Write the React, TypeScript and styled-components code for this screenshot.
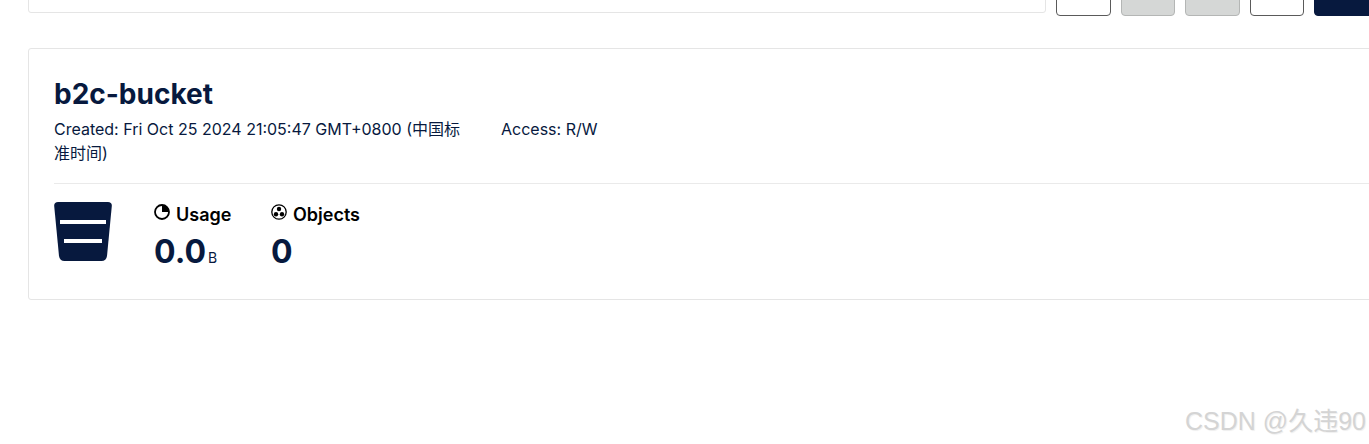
import styled, { createGlobalStyle } from "styled-components"

const GlobalStyle = createGlobalStyle`
  html, body {
    margin: 0;
    padding: 0;
    background: #fff;
  }
  body {
    font-family: Inter, "Noto Sans CJK SC", sans-serif;
    color: #07193e;
  }
`

const Page = styled.div`
  width: 1369px;
  height: 444px;
  overflow: hidden;
  position: relative;
  box-sizing: border-box;
  padding-left: 28px;
`

const TopBar = styled.div`
  display: flex;
  height: 60px;
  margin-top: -44px;
  gap: 10px;
  align-items: flex-start;
  width: 1400px;
`

const SearchBox = styled.div`
  box-sizing: border-box;
  width: 1018px;
  height: 57px;
  border: 1px solid #e5e5e5;
  border-radius: 3px;
  margin-right: 0;
`

const Actions = styled.div`
  display: flex;
  gap: 10px;
`

const ToolButton = styled.div<{ $variant: "outline" | "disabled" | "primary"; $width: number }>`
  box-sizing: border-box;
  width: ${(p) => p.$width}px;
  height: 60px;
  border-radius: 4px;
  border: 1px solid
    ${(p) => (p.$variant === "outline" ? "#5a5a5a" : p.$variant === "disabled" ? "#b4b6b5" : "#07193e")};
  background: ${(p) => (p.$variant === "outline" ? "#fff" : p.$variant === "disabled" ? "#d5d7d6" : "#07193e")};
`

const Card = styled.div`
  box-sizing: border-box;
  width: 1400px;
  height: 252px;
  margin-top: 32px;
  border: 1px solid #e5e5e5;
  border-radius: 3px;
  padding: 0 25px;
`

const Header = styled.div`
  height: 135px;
  padding-top: 28px;
  box-sizing: border-box;
  border-bottom: 1px solid #eaeaea;
`

const Title = styled.h1`
  margin: 0;
  font-size: 28px;
  line-height: 34px;
  font-weight: 700;
`

const MetaRow = styled.div`
  display: flex;
  gap: 40px;
  margin-top: 6px;
  font-size: 16px;
  line-height: 24px;
`

const Created = styled.div`
  width: 407px;
`

const Stats = styled.div`
  display: flex;
  padding-top: 18px;
`

const BucketIcon = styled.svg`
  width: 58px;
  height: 59px;
  display: block;
  margin-right: 42px;
`

const Stat = styled.div<{ $width: number }>`
  width: ${(p) => p.$width}px;
  padding-top: 0;
`

const StatLabel = styled.div`
  display: flex;
  align-items: flex-start;
  gap: 6px;
  font-size: 18px;
  line-height: 26px;
  font-weight: 600;
  color: #000;
`

const StatIcon = styled.svg`
  width: 16px;
  height: 16px;
  display: block;
  margin-top: 2px;
`

const StatValue = styled.div`
  margin-top: 5px;
  font-size: 32px;
  line-height: 38px;
  font-weight: 700;
`

const Unit = styled.span`
  font-size: 14px;
  font-weight: 400;
  margin-left: 2px;
`

const Watermark = styled.div`
  position: absolute;
  right: 3px;
  top: 404px;
  font-family: "Liberation Sans", "Noto Sans CJK SC", sans-serif;
  font-size: 25px;
  line-height: 34px;
  color: #d4d4d4;
  text-shadow: 1px 1px 1px #efefef;
  white-space: nowrap;
`

const App = () => {
  return (
    <Page>
      <GlobalStyle />
      <TopBar>
        <SearchBox />
        <Actions>
          <ToolButton $variant="outline" $width={55} />
          <ToolButton $variant="disabled" $width={54} />
          <ToolButton $variant="disabled" $width={55} />
          <ToolButton $variant="outline" $width={54} />
          <ToolButton $variant="primary" $width={80} />
        </Actions>
      </TopBar>
      <Card>
        <Header>
          <Title>b2c-bucket</Title>
          <MetaRow>
            <Created>Created: Fri Oct 25 2024 21:05:47 GMT+0800 (中国标准时间)</Created>
            <div>Access: R/W</div>
          </MetaRow>
        </Header>
        <Stats>
          <BucketIcon viewBox="0 0 58 59">
            <path
              d="M4 0H54C56.5 0 58 1.6 57.8 4L53 54C52.7 57 50.5 59 47.5 59H10.5C7.5 59 5.3 57 5 54L0.2 4C0 1.6 1.5 0 4 0Z"
              fill="#07193e"
            />
            <rect x="6" y="18" width="46" height="4" fill="#fff" />
            <rect x="10" y="37" width="38" height="4" fill="#fff" />
          </BucketIcon>
          <Stat $width={117}>
            <StatLabel>
              <StatIcon viewBox="0 0 16 16">
                <circle cx="8" cy="8" r="7" fill="none" stroke="#000" strokeWidth="1.8" />
                <path d="M8 8V1A7 7 0 0 1 15 8Z" fill="#000" />
              </StatIcon>
              Usage
            </StatLabel>
            <StatValue>
              0.0<Unit>B</Unit>
            </StatValue>
          </Stat>
          <Stat $width={100}>
            <StatLabel>
              <StatIcon viewBox="0 0 16 16">
                <circle cx="8" cy="8" r="7.2" fill="none" stroke="#000" strokeWidth="1.3" />
                <circle cx="8" cy="5" r="2.2" fill="#000" />
                <circle cx="5" cy="10.2" r="2.2" fill="#000" />
                <circle cx="11" cy="10.2" r="2.2" fill="#000" />
              </StatIcon>
              Objects
            </StatLabel>
            <StatValue>0</StatValue>
          </Stat>
        </Stats>
      </Card>
      <Watermark>CSDN @久违90</Watermark>
    </Page>
  )
}

export default App
